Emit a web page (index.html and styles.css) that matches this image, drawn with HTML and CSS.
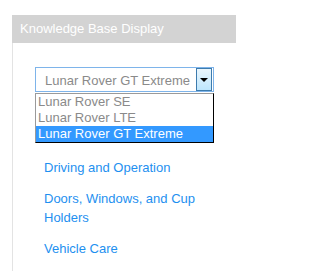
FILE: index.html
```html
<!DOCTYPE html>
<html>
<head>
<meta charset="utf-8">
<link rel="stylesheet" href="styles.css">
</head>
<body>
<div class="panel">
  <div class="panel-header">Knowledge Base Display</div>
  <div class="panel-body">
    <div class="select">
      <div class="select-value">Lunar Rover GT Extreme</div>
      <div class="select-button"><span class="arrow"></span></div>
    </div>
    <ul class="options">
      <li class="option">Lunar Rover SE</li>
      <li class="option">Lunar Rover LTE</li>
      <li class="option selected">Lunar Rover GT Extreme</li>
    </ul>
    <ul class="links">
      <li><a href="#">Driving and Operation</a></li>
      <li><a href="#">Doors, Windows, and Cup Holders</a></li>
      <li><a href="#">Vehicle Care</a></li>
    </ul>
  </div>
</div>
</body>
</html>
```
FILE: styles.css
```css
html, body {
  margin: 0;
  padding: 0;
  background: #ffffff;
  overflow: hidden;
}
body {
  padding: 15px 0 0 12px;
  font-family: "Liberation Sans", Arial, sans-serif;
  font-size: 13px;
}
.panel {
  width: 224px;
}
.panel-header {
  height: 28px;
  line-height: 28px;
  padding-left: 8px;
  background: #d3d3d3;
  color: #ffffff;
}
.panel-body {
  box-sizing: border-box;
  height: 228px;
  overflow: hidden;
  border-left: 1px solid #e3e3e3;
  padding: 24px 0 0 22px;
}
.select {
  box-sizing: border-box;
  width: 179px;
  height: 25px;
  border: 1px solid #7eb4ea;
  display: flex;
  background: #fff;
}
.select-value {
  flex: 1;
  padding: 2px 0 0 9px;
  line-height: 21px;
  color: #8a8a8a;
  white-space: nowrap;
}
.select-button {
  box-sizing: border-box;
  width: 16px;
  height: 23px;
  margin-right: 1px;
  border: 1px solid #3d7bad;
  background: linear-gradient(#eaf6fd, #bee6fd);
  display: flex;
  align-items: center;
  justify-content: center;
}
.arrow {
  width: 0;
  height: 0;
  border-left: 4px solid transparent;
  border-right: 4px solid transparent;
  border-top: 4px solid #000;
}
.options {
  box-sizing: border-box;
  width: 179px;
  margin: 1px 0 0 0;
  padding: 0;
  list-style: none;
  border-top: 1px solid #9a9a9a;
  border-left: 1px solid #9a9a9a;
  border-right: 1px solid #000;
  border-bottom: 1px solid #000;
}
.option {
  height: 16px;
  line-height: 16px;
  padding-left: 2px;
  color: #8a8a8a;
  white-space: nowrap;
}
.option.selected {
  background: #3399ff;
  color: #ffffff;
}
.links {
  margin: 15px 0 0 9px;
  padding: 0;
  list-style: none;
  width: 190px;
}
.links li {
  line-height: 19px;
  margin-bottom: 12px;
}
.links a {
  color: #1e90f0;
  text-decoration: none;
}
```
